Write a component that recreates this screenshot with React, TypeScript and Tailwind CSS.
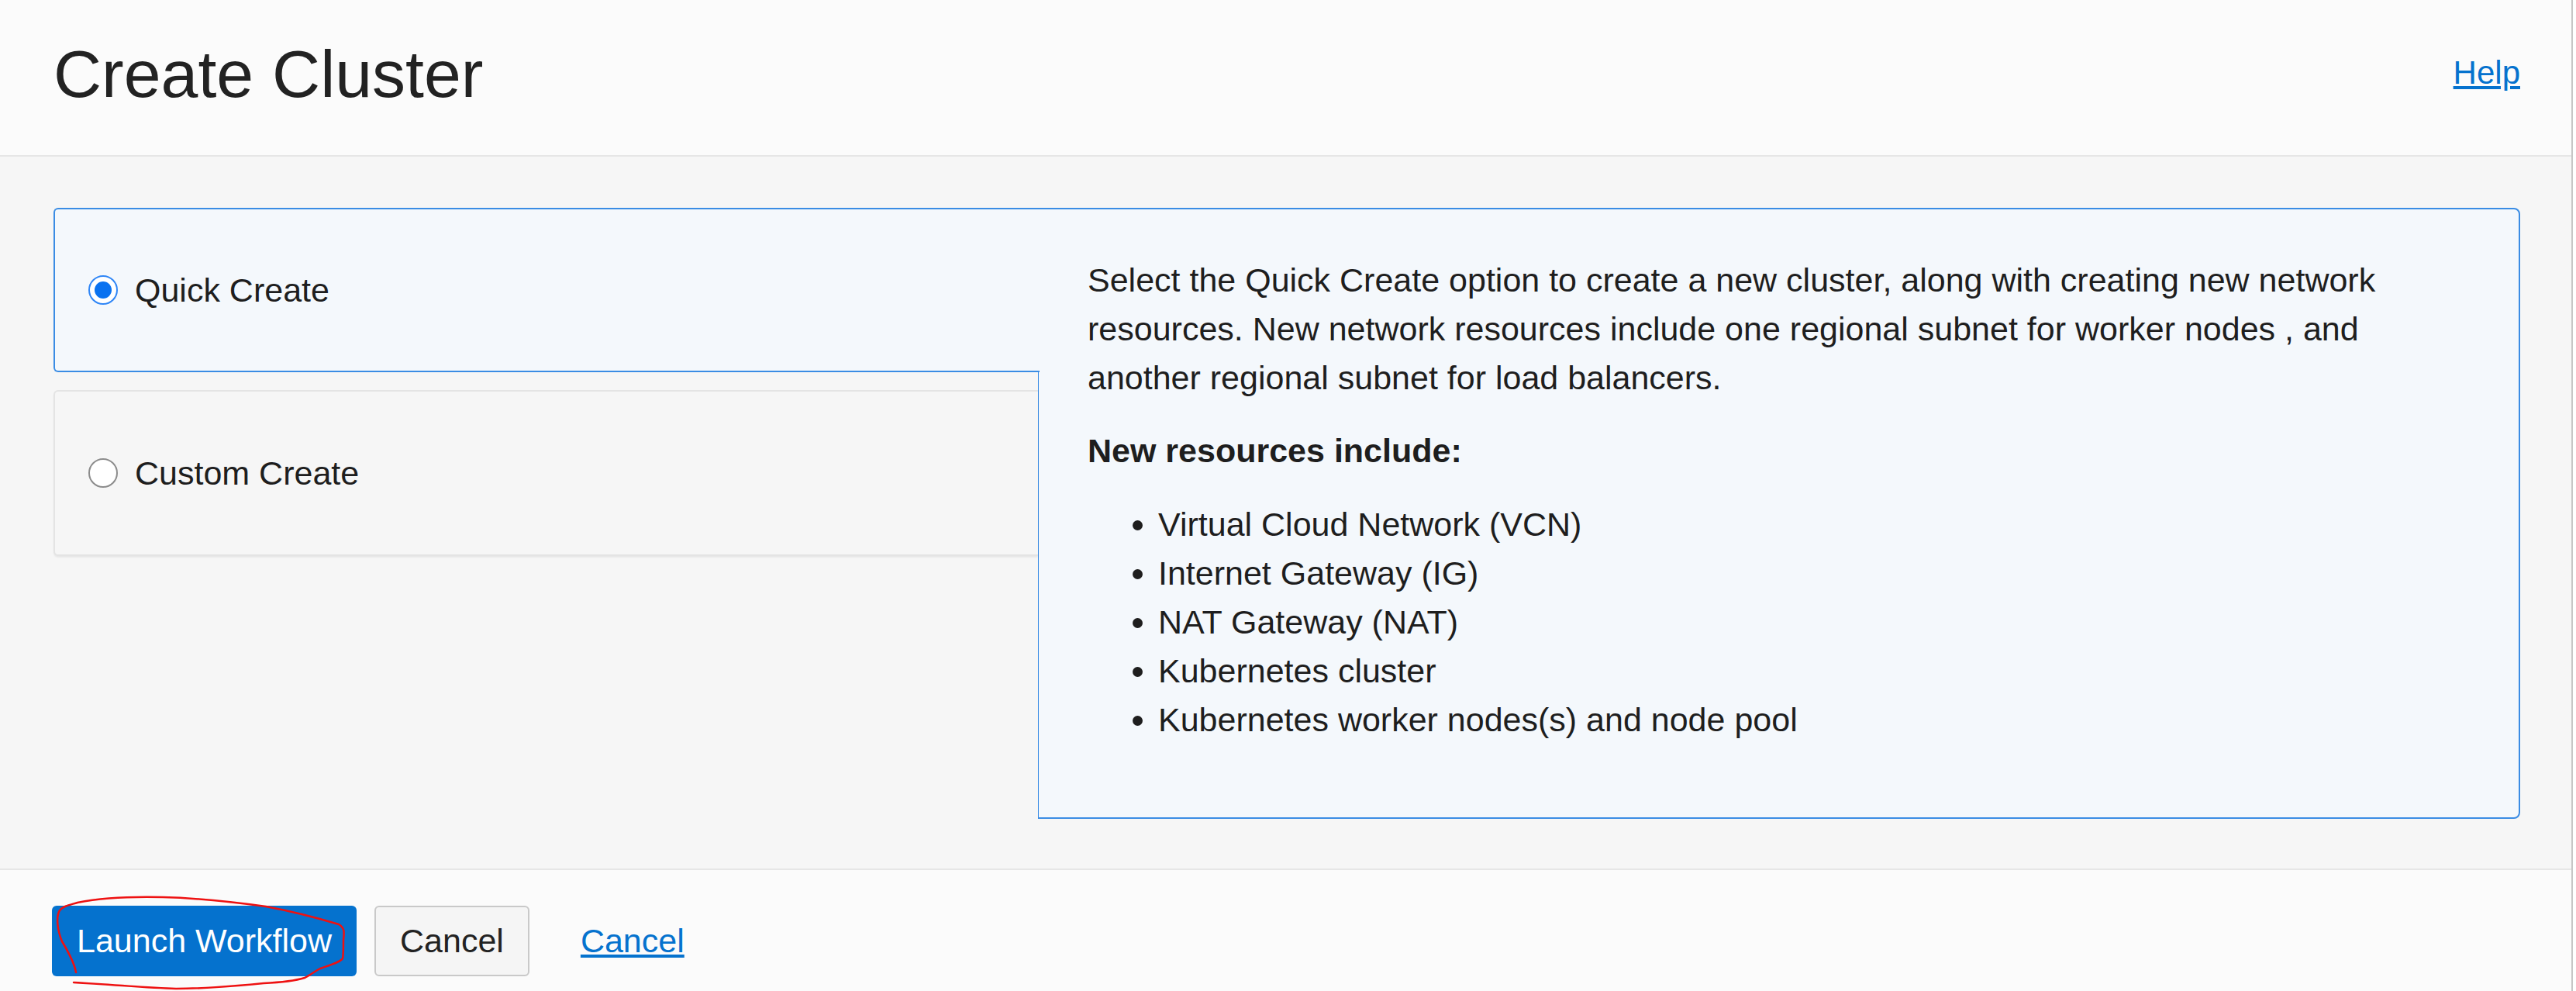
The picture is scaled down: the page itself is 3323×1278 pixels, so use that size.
import React from "react";

const resources = [
  "Virtual Cloud Network (VCN)",
  "Internet Gateway (IG)",
  "NAT Gateway (NAT)",
  "Kubernetes cluster",
  "Kubernetes worker nodes(s) and node pool",
];

function Radio({ checked }: { checked: boolean }) {
  if (checked) {
    return (
      <span className="flex h-[38px] w-[38px] shrink-0 items-center justify-center rounded-full border-2 border-[#2f86f6] bg-white">
        <span className="h-[22px] w-[22px] rounded-full bg-[#0a72f0]" />
      </span>
    );
  }
  return (
    <span className="h-[38px] w-[38px] shrink-0 rounded-full border-2 border-[#8c8c8c] bg-white" />
  );
}

export default function App() {
  return (
    <div
      className="flex min-h-screen w-[3319px] flex-col border-r-2 border-[#c6c6c6] bg-[#f6f6f6] text-[#1e1e1e]"
      style={{ fontFamily: '"Liberation Sans", Arial, sans-serif' }}
    >
      {/* header */}
      <div className="flex h-[202px] items-start justify-between border-b-2 border-[#e6e6e6] bg-[#fbfbfb] pl-[69px] pr-[66px]">
        <h1 className="pt-[52px] text-[86px] font-normal leading-none text-[#222]">
          Create Cluster
        </h1>
        <a href="#" className="pt-[73px] text-[42px] leading-none text-[#0572ce] underline">
          Help
        </a>
      </div>

      {/* body */}
      <div className="flex pl-[69px] pr-[66px] pt-[66px] pb-[64px]">
        <div className="relative z-10 flex w-[1270px] shrink-0 flex-col gap-[23px]">
          <div className="-mr-[2px] flex h-[212px] items-center gap-[22px] rounded-l-[6px] border-2 border-r-0 border-[#3a8ce4] bg-[#f4f8fc] pl-[43px]">
            <Radio checked />
            <span className="text-[43px] leading-none">Quick Create</span>
          </div>
          <div className="flex h-[214px] items-center gap-[22px] rounded-l-[6px] border-2 border-r-0 border-[#e4e4e4] bg-[#f6f6f6] pl-[43px] shadow-[0_2px_2px_rgba(0,0,0,0.06)]">
            <Radio checked={false} />
            <span className="text-[43px] leading-none">Custom Create</span>
          </div>
        </div>

        <div className="flex-1 rounded-r-[8px] border-2 border-l border-[#3a8ce4] bg-[#f4f8fc] pl-[63px] pr-[60px] pt-[60px] pb-[94px] text-[43px] leading-[63px]">
          <p className="w-[1740px]">
            Select the Quick Create option to create a new cluster, along with
            creating new network resources. New network resources include one
            regional subnet for worker nodes , and another regional subnet for
            load balancers.
          </p>
          <p className="mt-[31px] font-bold">New resources include:</p>
          <ul className="mt-[32px] list-disc pl-[91px]">
            {resources.map((item) => (
              <li key={item}>{item}</li>
            ))}
          </ul>
        </div>
      </div>

      {/* footer */}
      <div className="relative flex-1 border-t-2 border-[#e6e6e6] bg-[#fbfbfb]">
        <div className="flex items-center pl-[67px] pt-[46px]">
          <button className="h-[91px] rounded-[6px] bg-[#0572ce] px-[32px] text-[43px] text-white">
            Launch Workflow
          </button>
          <button className="ml-[23px] h-[91px] rounded-[6px] border-2 border-[#c9c9c9] bg-[#f5f5f5] px-[31px] text-[43px] text-[#222]">
            Cancel
          </button>
          <a href="#" className="ml-[66px] text-[43px] text-[#0572ce] underline">
            Cancel
          </a>
        </div>
        <svg
          className="pointer-events-none absolute left-0 top-0"
          width="500"
          height="160"
          viewBox="0 0 500 160"
          fill="none"
        >
          <path
            d="M98 132 C96 120 86 102 80 92 C74 78 72 60 77 52 C82 46 90 45 100 42 C130 36 170 34 210 35 C250 36 300 41 343 47 C370 52 410 62 437 70 C445 75 444 80 443 90 C443 100 443 110 442 114 C440 118 430 121 413 127 C405 131 400 136 393 139 C380 143 360 145 340 146 C300 150 260 153 227 153 C190 152 150 148 95 145"
            stroke="#ee1111"
            strokeWidth="2.5"
            strokeLinecap="round"
            strokeLinejoin="round"
          />
        </svg>
      </div>
    </div>
  );
}
